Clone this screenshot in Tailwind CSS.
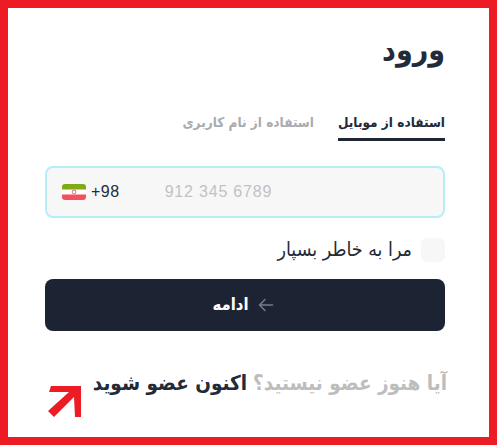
<!DOCTYPE html>
<html lang="fa">

<head>
    <meta charset="UTF-8">
    <title>ورود</title>
    <script src="https://cdn.jsdelivr.net/npm/@tailwindcss/browser@4"></script>
</head>

<body class="m-0 bg-white">
    <div class="w-[497px] h-[445px] overflow-hidden border-8 border-[#ed1c24] bg-white font-['DejaVu_Sans_Condensed','DejaVu_Sans',sans-serif] font-stretch-condensed text-[#232a38]">
        <div dir="rtl" class="flex flex-col pl-[37px] pr-[44px]">
            <h1 class="mt-[20px] h-[44px] text-[30px] leading-[44px] font-bold">ورود</h1>

            <div class="mt-[26px] flex gap-[24px] text-[13.5px] font-bold">
                <div class="h-[43px] border-b-[3px] border-[#1e2533] pt-[14px]">استفاده از موبایل</div>
                <div class="pt-[14px] text-[#a9abb0]">استفاده از نام کاربری</div>
            </div>

            <div dir="ltr" class="mt-[25px] flex h-[52px] items-center rounded-[8px] border-2 border-[#b5eff6] bg-[#f7f7f8] pl-[15px]">
                <svg width="24" height="16" viewBox="0 0 24 16" class="rounded-[3px]">
                    <rect width="24" height="6" fill="#7fab14" />
                    <rect y="5.5" width="24" height="5.5" fill="#fff" />
                    <rect y="10.5" width="24" height="5.5" fill="#f4505f" />
                    <circle cx="12" cy="8" r="1.8" fill="none" stroke="#e58a94" stroke-width="1.2" />
                </svg>
                <span class="ml-[5px] font-['Liberation_Sans'] text-[16px] tracking-[0.5px] text-[#262b36]">+98</span>
                <span class="ml-[45px] font-['Liberation_Sans'] text-[16px] tracking-[0.8px] text-[#c2c2c2]">912 345 6789</span>
            </div>

            <div class="mt-[20px] flex h-[24px] items-center gap-[9px]">
                <div class="h-[24px] w-[24px] rounded-[6px] bg-[#f7f7f8]"></div>
                <span class="text-[19.5px]">مرا به خاطر بسپار</span>
            </div>

            <button class="mt-[17px] flex h-[52px] items-center justify-center gap-[9px] rounded-[8px] bg-[#1c2434] pr-[4px] text-[16.5px] font-bold text-white">
                <svg width="16" height="14" viewBox="0 0 16 14" fill="none" stroke="#757b87" stroke-width="1.5" stroke-linecap="round" stroke-linejoin="round">
                    <path d="M14.5 7H1.5M7 1.5 1.5 7 7 12.5" />
                </svg>
                ادامه
            </button>

            <div class="mr-[-2px] mt-[37px] flex h-[50px] items-start text-[20.5px] font-bold">
                <span class="text-[#bdbdbd]">آیا هنوز عضو نیستید؟</span>
                <span class="mr-[6px]">اکنون عضو شوید</span>
            </div>
        </div>
    </div>
    <svg class="absolute left-[48px] top-[385px]" width="34" height="33" viewBox="0 0 34 33">
        <path d="M3 1H33V32L27 32 26 12 6 32 0 26 21 7 1 7Z" fill="#ed1c24" />
    </svg>
</body>

</html>
